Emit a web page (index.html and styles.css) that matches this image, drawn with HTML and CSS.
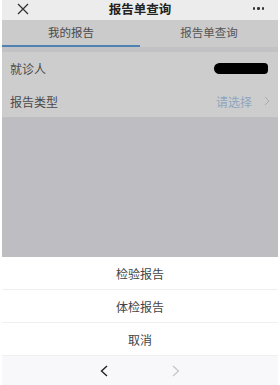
FILE: index.html
```html
<!DOCTYPE html>
<html lang="zh">
<head>
<meta charset="utf-8">
<title>报告单查询</title>
<link rel="stylesheet" href="styles.css">
</head>
<body>
<div class="page">
  <header class="nav">
    <svg class="nav-close" width="12" height="12" viewBox="0 0 12 12"><path d="M1 1L11 11M11 1L1 11" stroke="#333" stroke-width="1.3" fill="none"/></svg>
    <div class="nav-title">报告单查询</div>
    <div class="nav-more"><span></span><span></span><span></span></div>
  </header>
  <div class="tabs">
    <div class="tab tab-active">我的报告</div>
    <div class="tab">报告单查询</div>
  </div>
  <div class="gap"></div>
  <div class="rows">
    <div class="row">
      <span class="row-label">就诊人</span>
      <span class="redact"></span>
    </div>
    <div class="row">
      <span class="row-label">报告类型</span>
      <span class="row-value">请选择</span>
      <svg class="chev" width="6" height="10" viewBox="0 0 6 10"><path d="M1 1L5 5L1 9" stroke="#a8aab0" stroke-width="1" fill="none"/></svg>
    </div>
  </div>
  <div class="mask"></div>
  <div class="sheet">
    <div class="sheet-item">检验报告</div>
    <div class="sheet-item">体检报告</div>
    <div class="sheet-item">取消</div>
  </div>
  <footer class="toolbar">
    <svg width="8" height="12" viewBox="0 0 8 12"><path d="M7 1L1.5 6L7 11" stroke="#222" stroke-width="1.4" fill="none"/></svg>
    <svg width="8" height="12" viewBox="0 0 8 12"><path d="M1 1L6.5 6L1 11" stroke="#c4c4c8" stroke-width="1.2" fill="none"/></svg>
  </footer>
</div>
</body>
</html>
```

FILE: styles.css
```css
html, body {
  margin: 0;
  padding: 0;
  background: #ffffff;
}
body {
  padding: 0 2px;
  font-family: "Noto Sans CJK SC", "Noto Sans", sans-serif;
}
.page {
  height: 385px;
  display: flex;
  flex-direction: column;
}
.nav {
  height: 20px;
  background: #ececec;
  display: flex;
  align-items: center;
  justify-content: space-between;
  padding: 0 14px 0 15px;
  position: relative;
}
.nav-close {
  display: block;
  margin-top: -3px;
}
.nav-title {
  font-size: 12.5px;
  font-weight: bold;
  color: #222;
  position: absolute;
  left: 0;
  right: 0;
  top: 0;
  text-align: center;
  line-height: 18px;
}
.nav-more {
  display: flex;
  gap: 2px;
  margin-top: -3px;
}
.nav-more span {
  width: 2.5px;
  height: 2.5px;
  border-radius: 50%;
  background: #333;
}
.tabs {
  height: 27px;
  background: #cbcbcb;
  display: flex;
}
.tab {
  flex: 1;
  text-align: center;
  font-size: 11.5px;
  line-height: 25px;
  color: #555;
  border-bottom: 2px solid transparent;
}
.tab-active {
  border-bottom-color: #4f81b3;
  color: #4a4a4a;
}
.gap {
  height: 5px;
  background: #c2c2c5;
}
.rows {
  background: #cdcdcd;
}
.row {
  height: 32px;
  display: flex;
  align-items: center;
  padding: 0 8px 0 8px;
  font-size: 12px;
  color: #4a4a4a;
}
.row:first-child {
  height: 33px;
}
.row-label {
  flex: 1;
}
.redact {
  width: 54px;
  height: 11px;
  margin-right: 2px;
  background: #000;
  border-radius: 6px 4px 4px 6px;
}
.row-value {
  color: #8ea6c0;
  margin-right: 12px;
}
.chev {
  display: block;
}
.mask {
  flex: 1;
  background: #bebec2;
}
.sheet {
  background: #fff;
}
.sheet-item {
  height: 32px;
  line-height: 33px;
  text-align: center;
  font-size: 12px;
  color: #444;
  border-bottom: 1px solid #efeff1;
}
.toolbar {
  height: 29px;
  background: #f8f8fa;
  display: flex;
  justify-content: center;
  align-items: center;
  gap: 64px;
}
.toolbar svg {
  display: block;
}
```
